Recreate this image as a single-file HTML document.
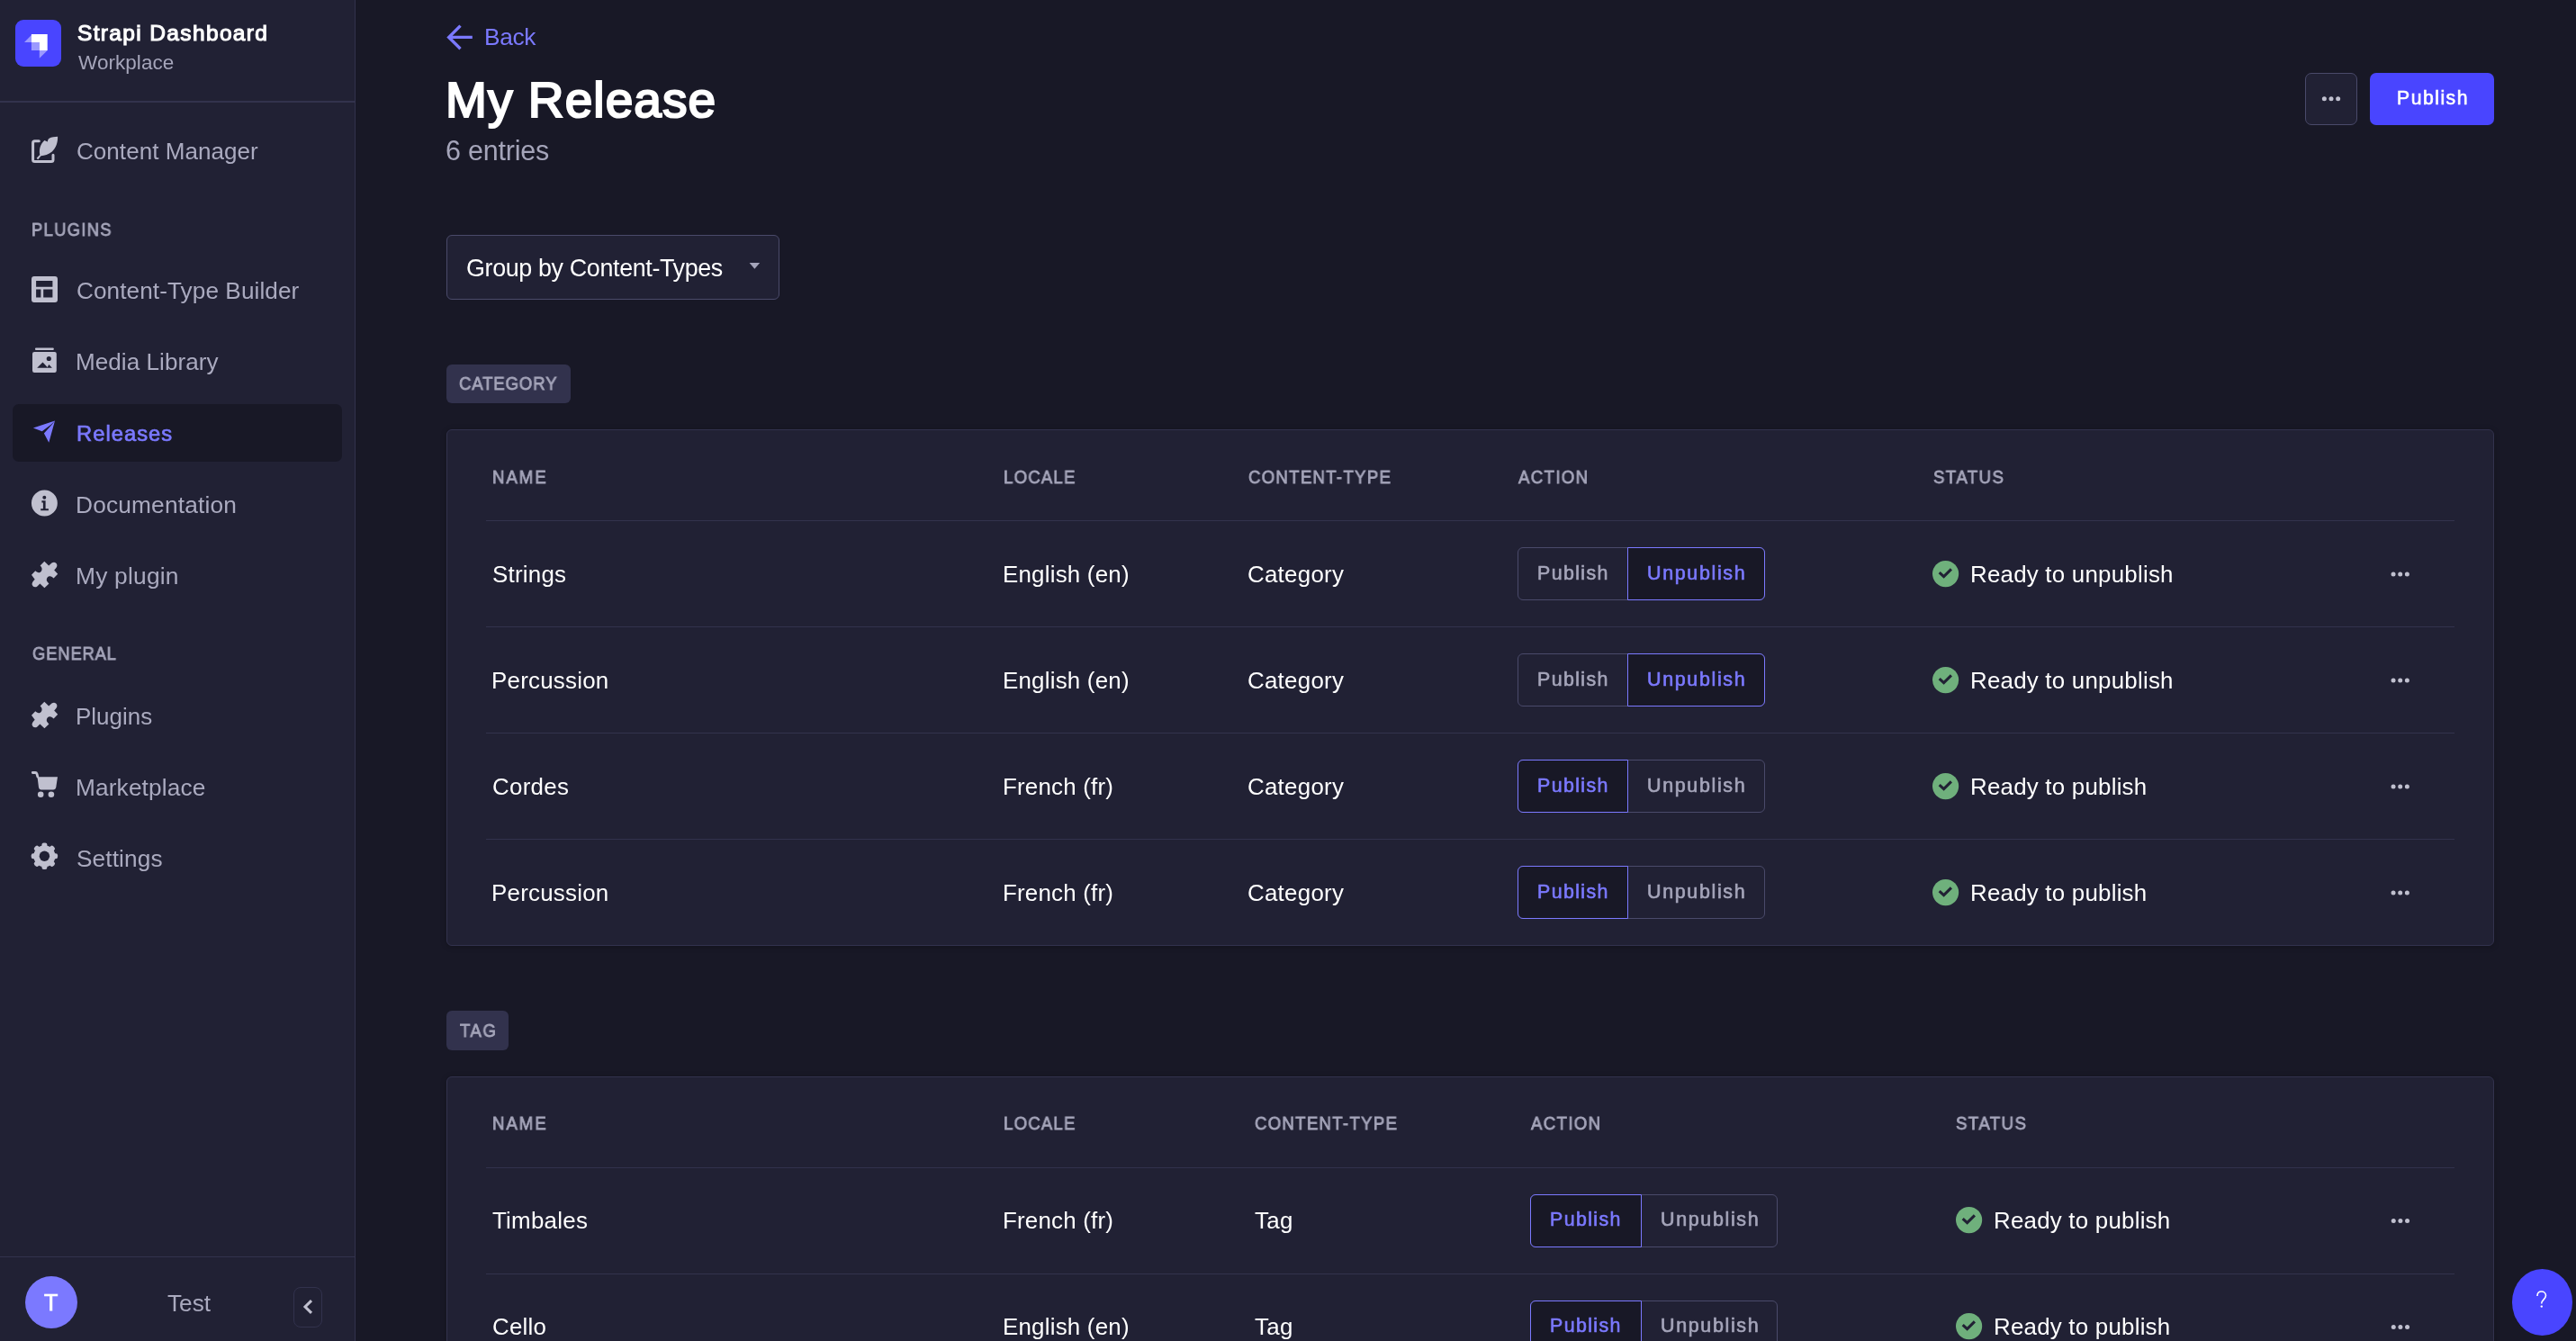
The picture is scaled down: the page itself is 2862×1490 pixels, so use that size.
<!DOCTYPE html>
<html lang="en"><head><meta charset="utf-8"><title>My Release | Strapi</title>
<style>
*{box-sizing:border-box;margin:0;padding:0}
html,body{width:2862px;height:1490px;overflow:hidden;background:#181826;font-family:"Liberation Sans",sans-serif}
.t{position:absolute;line-height:1;white-space:nowrap;will-change:transform}
.ic{position:absolute;overflow:visible}
nav.side{position:absolute;left:0;top:0;width:395px;height:1490px;background:#212134;border-right:1px solid #32324d}
.side .hdr-b{position:absolute;left:0;top:112px;width:394px;height:2px;background:#32324d}
.side .ftr-b{position:absolute;left:0;top:1396px;width:394px;height:1px;background:#32324d}
.logo{position:absolute;left:17px;top:22px;width:51px;height:52px;border-radius:9px;background:#4945ff}
.active{position:absolute;left:14px;top:449px;width:366px;height:64px;border-radius:7px;background:#181826}
.avatar{position:absolute;left:28px;top:1418px;width:58px;height:58px;border-radius:50%;background:#7b79ff}
.collapse{position:absolute;left:326px;top:1430px;width:32px;height:45px;border:1px solid #32324d;border-radius:8px}
.panel{position:absolute;background:#212134;border:1px solid #32324d;border-radius:6px;box-shadow:0 1px 6px rgba(0,0,0,.25)}
.hr{position:absolute;height:1px;background:#32324d}
.grp{position:absolute;border:1px solid #4a4a6a;border-radius:6px}
.seg{position:absolute}
.seg.act{background:#181826;border:1px solid #7b79ff}
.btn{position:absolute;border-radius:7px}
.badge{position:absolute;background:#32324d;border-radius:6px}
.select{position:absolute;left:496px;top:261px;width:370px;height:72px;background:#212134;border:1px solid #4a4a6a;border-radius:6px}
.help{position:absolute;left:2791px;top:1410px;width:67px;height:74px;border-radius:50%;background:#4945ff}
</style></head>
<body>
<nav class="side">
  <div class="logo"></div>
  <svg class="ic" style="left:17px;top:22px" width="51" height="52" viewBox="17 22 51 52">
    <path d="M34.9 38 H52.7 V55.9 H43.8 V47.1 H34.9 Z" fill="#fff"/>
    <path d="M27 47.1 L34.9 39.1 V47.1 Z M34.9 47.1 H43.8 V55.9 H34.9 Z M43.8 55.9 H52.7 L43.8 64.8 Z" fill="#fff" fill-opacity=".45"/>
  </svg>
  <div class="hdr-b"></div>
  <div class="active"></div>
  <!-- Content Manager icon -->
  <svg class="ic" style="left:30px;top:146px" width="40" height="40" viewBox="30 146 40 40">
    <path d="M43.3 156.7 H38.6 a2 2 0 0 0 -2 2 V177.6 a2 2 0 0 0 2 2 H57 a2 2 0 0 0 2 -2 V172.2" stroke="#c0c0cf" stroke-width="3" fill="none" stroke-linecap="round"/>
    <path d="M40.6 175.8 L44.3 172.1 C43.2 166 44.6 160.2 49.4 155.9 L52.9 157.6 C53 156 53.4 154.8 54.2 153.9 C57.4 152.3 61 151.9 64.1 151.8 C64.3 158.3 62.3 164.5 57.8 168.5 C54 171.8 49.3 172.8 45.5 173.2 L42.2 177.2 Z" fill="#c0c0cf"/>
  </svg>
  <!-- CTB icon -->
  <svg class="ic" style="left:30px;top:300px" width="40" height="40" viewBox="30 300 40 40">
    <path fill-rule="evenodd" fill="#c0c0cf" d="M38 306.9 H61 a3 3 0 0 1 3 3 V333 a3 3 0 0 1 -3 3 H38 a3 3 0 0 1 -3 -3 V309.9 a3 3 0 0 1 3 -3 Z M40.1 312.1 V318.7 H58.4 V312.1 Z M40.1 321.5 V330.4 H45.4 V321.5 Z M48.2 321.5 V330.4 H58.4 V321.5 Z"/>
  </svg>
  <!-- Media library icon -->
  <svg class="ic" style="left:30px;top:380px" width="40" height="40" viewBox="30 380 40 40">
    <rect x="39" y="386.4" width="20.8" height="2.7" rx="1" fill="#c0c0cf"/>
    <path fill-rule="evenodd" fill="#c0c0cf" d="M38.2 390.9 H60.6 a2.2 2.2 0 0 1 2.2 2.2 V411.7 a2.2 2.2 0 0 1 -2.2 2.2 H38.2 a2.2 2.2 0 0 1 -2.2 -2.2 V393.1 a2.2 2.2 0 0 1 2.2 -2.2 Z M41.2 408.8 L47.5 402.5 L52.7 407.9 L54.3 405.1 L57.9 408.8 Z M54.3 398.5 m-2.6 0 a2.6 2.6 0 1 0 5.2 0 a2.6 2.6 0 1 0 -5.2 0 Z"/>
  </svg>
  <!-- Releases icon -->
  <svg class="ic" style="left:30px;top:460px" width="40" height="40" viewBox="30 460 40 40">
    <path fill="#7b79ff" d="M36.9 475.5 L61 467.5 L56.4 472 L46.7 479.3 Z M48.9 481.6 L57 472.6 L61 467.5 L54.3 491.8 Z"/>
  </svg>
  <!-- Documentation icon -->
  <svg class="ic" style="left:30px;top:540px" width="40" height="40" viewBox="30 540 40 40">
    <path fill-rule="evenodd" fill="#c0c0cf" d="M49.4 544.6 a14.45 14.45 0 1 1 0 28.9 a14.45 14.45 0 1 1 0 -28.9 Z M49.3 550.8 a2 2 0 1 0 0 4 a2 2 0 1 0 0 -4 Z M46.4 556.3 V558.4 H47.9 V565.3 H45.2 V567.2 H53.9 V565.3 H50.6 V556.3 Z"/>
  </svg>
  <!-- puzzle icons -->
  <svg class="ic" style="left:30px;top:618px" width="40" height="40" viewBox="0 0 40 40">
    <path id="puz" fill="#c0c0cf" d="M19.3 5.8 L24.2 10.6 L27.5 7.6 C29.6 6 32.5 6.5 33.3 9.6 C33.8 11.5 32.6 13.1 30.2 15.6 L34.2 19.8 L29.6 24.6 C28.4 23.1 26.6 21.8 24.6 22.3 C22.2 23 21.3 25.6 22 27.5 C22.6 28.6 23.4 29.3 24.4 30.4 L19.4 35.2 L14.4 30.4 L11.4 33.4 C9.5 34.9 6.7 34.6 5.7 31.8 C5.2 29.8 6.3 28.1 8.7 25.7 L5 20.7 L9.3 16.3 C10.6 17.8 12.6 18.6 14.4 17.9 C16.6 17 17 14.4 16.3 12.8 C15.9 11.9 15.3 11.2 14.6 10.5 Z"/>
  </svg>
  <svg class="ic" style="left:30px;top:774px" width="40" height="40" viewBox="0 0 40 40">
    <use href="#puz"/>
  </svg>
  <!-- cart icon -->
  <svg class="ic" style="left:30px;top:852px" width="40" height="40" viewBox="30 852 40 40">
    <path d="M36.3 858.5 H39.3 Q40.5 858.5 41 860 L41.8 863" stroke="#c0c0cf" stroke-width="2.8" fill="none" stroke-linecap="round"/>
    <path fill="#c0c0cf" d="M41.5 863.2 H64 L62.3 874.5 Q61.8 877.4 59 877.4 H45.5 Q43.4 877.4 43 875 Z"/>
    <circle cx="45.2" cy="882.7" r="3.3" fill="#c0c0cf"/><circle cx="56.9" cy="882.7" r="3.3" fill="#c0c0cf"/>
  </svg>
  <!-- cog icon -->
  <svg class="ic" style="left:30px;top:931px" width="40" height="40" viewBox="30 931 40 40">
    <g transform="translate(49.4 951.3)" fill="#c0c0cf">
      <circle r="12"/>
      <rect x="-3" y="-14.7" width="6" height="8" rx="2.2" transform="rotate(0)"/>
      <rect x="-3" y="-14.7" width="6" height="8" rx="2.2" transform="rotate(45)"/>
      <rect x="-3" y="-14.7" width="6" height="8" rx="2.2" transform="rotate(90)"/>
      <rect x="-3" y="-14.7" width="6" height="8" rx="2.2" transform="rotate(135)"/>
      <rect x="-3" y="-14.7" width="6" height="8" rx="2.2" transform="rotate(180)"/>
      <rect x="-3" y="-14.7" width="6" height="8" rx="2.2" transform="rotate(225)"/>
      <rect x="-3" y="-14.7" width="6" height="8" rx="2.2" transform="rotate(270)"/>
      <rect x="-3" y="-14.7" width="6" height="8" rx="2.2" transform="rotate(315)"/>
      <circle r="5.7" fill="#212134"/>
    </g>
  </svg>
  <div class="ftr-b"></div>
  <div class="avatar"></div>
  <div class="collapse"></div>
  <svg class="ic" style="left:330px;top:1440px" width="24" height="24" viewBox="330 1440 24 24">
    <path d="M346 1445.2 L339 1452 L346 1458.9" stroke="#c0c0cf" stroke-width="3" fill="none"/>
  </svg>
</nav>
<main>
  <svg class="ic" style="left:490px;top:22px" width="40" height="40" viewBox="490 22 40 40">
    <path d="M524.8 41.4 H500 M511.5 28.6 L498.7 41.4 L511.5 54.2" stroke="#7b79ff" stroke-width="3.4" fill="none"/>
  </svg>
  <div class="btn" style="left:2561px;top:81px;width:58px;height:58px;background:#212134;border:1px solid #4a4a6a"></div>
  <svg class="ic" style="left:2575px;top:102px" width="30" height="16" viewBox="2575 102 30 16"><circle cx="2582.35" cy="109.70" r="2.5" fill="#c0c0cf"/><circle cx="2590.00" cy="109.70" r="2.5" fill="#c0c0cf"/><circle cx="2597.65" cy="109.70" r="2.5" fill="#c0c0cf"/></svg>
  <div class="btn" style="left:2633px;top:81px;width:138px;height:58px;background:#4945ff"></div>
  <div class="select"></div>
  <svg class="ic" style="left:828px;top:288px" width="20" height="14" viewBox="828 288 20 14">
    <path d="M832.6 292 H844.2 L838.4 298.8 Z" fill="#a5a5ba"/>
  </svg>
  <div class="badge" style="left:496px;top:405px;width:138px;height:43px"></div>
  <div class="badge" style="left:496px;top:1123px;width:69px;height:44px"></div>
<div class="panel" style="left:496px;top:477px;width:2275px;height:574px"></div>
<div class="hr" style="left:540px;top:578px;width:2187px"></div>
<div class="hr" style="left:540px;top:696px;width:2187px"></div>
<div class="hr" style="left:540px;top:814px;width:2187px"></div>
<div class="hr" style="left:540px;top:932px;width:2187px"></div>
<div class="grp" style="left:1686px;top:608px;width:275px;height:59px"></div><div class="seg act" style="left:1808px;top:608px;width:153px;height:59px;border-radius:0 6px 6px 0"></div>
<svg class="ic" style="left:2146.80px;top:622.70px" width="29.2" height="29.2" viewBox="0 0 29.2 29.2"><circle cx="14.6" cy="14.6" r="14.6" fill="#6fb07c"/><path d="M7.7 13.2 L12.6 17.7 L20.9 9.4" stroke="#212134" stroke-width="3.1" fill="none"/></svg>
<svg class="ic" style="left:2650px;top:630px" width="34" height="16" viewBox="2650 630 34 16"><circle cx="2659.05" cy="638.00" r="2.5" fill="#c0c0cf"/><circle cx="2666.70" cy="638.00" r="2.5" fill="#c0c0cf"/><circle cx="2674.35" cy="638.00" r="2.5" fill="#c0c0cf"/></svg>
<div class="grp" style="left:1686px;top:726px;width:275px;height:59px"></div><div class="seg act" style="left:1808px;top:726px;width:153px;height:59px;border-radius:0 6px 6px 0"></div>
<svg class="ic" style="left:2146.80px;top:740.70px" width="29.2" height="29.2" viewBox="0 0 29.2 29.2"><circle cx="14.6" cy="14.6" r="14.6" fill="#6fb07c"/><path d="M7.7 13.2 L12.6 17.7 L20.9 9.4" stroke="#212134" stroke-width="3.1" fill="none"/></svg>
<svg class="ic" style="left:2650px;top:748px" width="34" height="16" viewBox="2650 748 34 16"><circle cx="2659.05" cy="756.00" r="2.5" fill="#c0c0cf"/><circle cx="2666.70" cy="756.00" r="2.5" fill="#c0c0cf"/><circle cx="2674.35" cy="756.00" r="2.5" fill="#c0c0cf"/></svg>
<div class="grp" style="left:1686px;top:844px;width:275px;height:59px"></div><div class="seg act" style="left:1686px;top:844px;width:123px;height:59px;border-radius:6px 0 0 6px"></div>
<svg class="ic" style="left:2146.80px;top:858.70px" width="29.2" height="29.2" viewBox="0 0 29.2 29.2"><circle cx="14.6" cy="14.6" r="14.6" fill="#6fb07c"/><path d="M7.7 13.2 L12.6 17.7 L20.9 9.4" stroke="#212134" stroke-width="3.1" fill="none"/></svg>
<svg class="ic" style="left:2650px;top:866px" width="34" height="16" viewBox="2650 866 34 16"><circle cx="2659.05" cy="874.00" r="2.5" fill="#c0c0cf"/><circle cx="2666.70" cy="874.00" r="2.5" fill="#c0c0cf"/><circle cx="2674.35" cy="874.00" r="2.5" fill="#c0c0cf"/></svg>
<div class="grp" style="left:1686px;top:962px;width:275px;height:59px"></div><div class="seg act" style="left:1686px;top:962px;width:123px;height:59px;border-radius:6px 0 0 6px"></div>
<svg class="ic" style="left:2146.80px;top:976.70px" width="29.2" height="29.2" viewBox="0 0 29.2 29.2"><circle cx="14.6" cy="14.6" r="14.6" fill="#6fb07c"/><path d="M7.7 13.2 L12.6 17.7 L20.9 9.4" stroke="#212134" stroke-width="3.1" fill="none"/></svg>
<svg class="ic" style="left:2650px;top:984px" width="34" height="16" viewBox="2650 984 34 16"><circle cx="2659.05" cy="992.00" r="2.5" fill="#c0c0cf"/><circle cx="2666.70" cy="992.00" r="2.5" fill="#c0c0cf"/><circle cx="2674.35" cy="992.00" r="2.5" fill="#c0c0cf"/></svg>
<div class="panel" style="left:496px;top:1196px;width:2275px;height:500px"></div>
<div class="hr" style="left:540px;top:1297px;width:2187px"></div>
<div class="hr" style="left:540px;top:1415px;width:2187px"></div>
<div class="grp" style="left:1700px;top:1327px;width:275px;height:59px"></div><div class="seg act" style="left:1700px;top:1327px;width:124px;height:59px;border-radius:6px 0 0 6px"></div>
<svg class="ic" style="left:2172.80px;top:1340.70px" width="29.2" height="29.2" viewBox="0 0 29.2 29.2"><circle cx="14.6" cy="14.6" r="14.6" fill="#6fb07c"/><path d="M7.7 13.2 L12.6 17.7 L20.9 9.4" stroke="#212134" stroke-width="3.1" fill="none"/></svg>
<svg class="ic" style="left:2650px;top:1348px" width="34" height="16" viewBox="2650 1348 34 16"><circle cx="2659.25" cy="1356.50" r="2.5" fill="#c0c0cf"/><circle cx="2666.90" cy="1356.50" r="2.5" fill="#c0c0cf"/><circle cx="2674.55" cy="1356.50" r="2.5" fill="#c0c0cf"/></svg>
<div class="grp" style="left:1700px;top:1445px;width:275px;height:59px"></div><div class="seg act" style="left:1700px;top:1445px;width:124px;height:59px;border-radius:6px 0 0 6px"></div>
<svg class="ic" style="left:2172.80px;top:1458.70px" width="29.2" height="29.2" viewBox="0 0 29.2 29.2"><circle cx="14.6" cy="14.6" r="14.6" fill="#6fb07c"/><path d="M7.7 13.2 L12.6 17.7 L20.9 9.4" stroke="#212134" stroke-width="3.1" fill="none"/></svg>
<svg class="ic" style="left:2650px;top:1466px" width="34" height="16" viewBox="2650 1466 34 16"><circle cx="2659.25" cy="1474.50" r="2.5" fill="#c0c0cf"/><circle cx="2666.90" cy="1474.50" r="2.5" fill="#c0c0cf"/><circle cx="2674.55" cy="1474.50" r="2.5" fill="#c0c0cf"/></svg>
  <div class="help"></div>
  <svg class="ic" style="left:2810px;top:1430px" width="28" height="28" viewBox="2810 1430 28 28">
    <path d="M2819 1440 C2819 1436.5 2821.2 1435 2823.6 1435 C2826.3 1435 2828.5 1436.8 2828.5 1439.6 C2828.5 1443.5 2823.7 1444.3 2823.7 1448.4" stroke="#fff" stroke-width="1.6" fill="none"/>
    <circle cx="2823.8" cy="1451.6" r="1.2" fill="#fff"/>
  </svg>
</main>
<div class="t" style="left:86.27px;top:25.00px;font-size:24.54px;letter-spacing:1.340px;color:#ffffff;-webkit-text-stroke:1.10px #ffffff">Strapi Dashboard</div>
<div class="t" style="left:86.70px;top:59.00px;font-size:22.51px;letter-spacing:0.047px;color:#a5a5ba;-webkit-text-stroke:0.00px #a5a5ba">Workplace</div>
<div class="t" style="left:85.20px;top:155.00px;font-size:26.05px;letter-spacing:0.028px;color:#aaaabf;-webkit-text-stroke:0.00px #aaaabf">Content Manager</div>
<div class="t" style="left:85.19px;top:310.00px;font-size:26.17px;letter-spacing:0.082px;color:#aaaabf;-webkit-text-stroke:0.00px #aaaabf">Content-Type Builder</div>
<div class="t" style="left:84.41px;top:389.00px;font-size:26.09px;letter-spacing:0.047px;color:#aaaabf;-webkit-text-stroke:0.00px #aaaabf">Media Library</div>
<div class="t" style="left:84.40px;top:548.00px;font-size:26.30px;letter-spacing:0.165px;color:#aaaabf;-webkit-text-stroke:0.00px #aaaabf">Documentation</div>
<div class="t" style="left:84.39px;top:627.00px;font-size:26.39px;letter-spacing:0.204px;color:#aaaabf;-webkit-text-stroke:0.00px #aaaabf">My plugin</div>
<div class="t" style="left:84.42px;top:783.00px;font-size:25.98px;letter-spacing:-0.010px;color:#aaaabf;-webkit-text-stroke:0.00px #aaaabf">Plugins</div>
<div class="t" style="left:84.40px;top:862.00px;font-size:26.26px;letter-spacing:0.136px;color:#aaaabf;-webkit-text-stroke:0.00px #aaaabf">Marketplace</div>
<div class="t" style="left:85.45px;top:941.00px;font-size:26.23px;letter-spacing:0.119px;color:#aaaabf;-webkit-text-stroke:0.00px #aaaabf">Settings</div>
<div class="t" style="left:85.16px;top:471.00px;font-size:23.74px;letter-spacing:1.030px;color:#7b79ff;-webkit-text-stroke:0.71px #7b79ff">Releases</div>
<div class="t" style="left:35.22px;top:246.00px;font-size:19.33px;letter-spacing:1.389px;color:#a5a5ba;-webkit-text-stroke:0.77px #a5a5ba;transform:scaleX(0.950);transform-origin:0 0">PLUGINS</div>
<div class="t" style="left:35.77px;top:717.00px;font-size:19.33px;letter-spacing:0.916px;color:#a5a5ba;-webkit-text-stroke:0.77px #a5a5ba;transform:scaleX(0.950);transform-origin:0 0">GENERAL</div>
<div class="t" style="left:49.27px;top:1435.00px;font-size:25.16px;letter-spacing:0.000px;color:#ffffff;-webkit-text-stroke:0.75px #ffffff">T</div>
<div class="t" style="left:185.58px;top:1435.00px;font-size:26.19px;letter-spacing:0.030px;color:#aaaabf;-webkit-text-stroke:0.00px #aaaabf">Test</div>
<div class="t" style="left:537.70px;top:28.00px;font-size:26.25px;letter-spacing:-0.328px;color:#7b79ff;-webkit-text-stroke:0.00px #7b79ff">Back</div>
<div class="t" style="left:494.50px;top:84.00px;font-size:55.00px;letter-spacing:1.087px;color:#ffffff;-webkit-text-stroke:2.20px #ffffff">My Release</div>
<div class="t" style="left:495.48px;top:152.00px;font-size:30.46px;letter-spacing:-0.188px;color:#a5a5ba;-webkit-text-stroke:0.00px #a5a5ba">6 entries</div>
<div class="t" style="left:2663.02px;top:98.00px;font-size:21.17px;letter-spacing:1.516px;color:#ffffff;-webkit-text-stroke:0.64px #ffffff">Publish</div>
<div class="t" style="left:518.26px;top:285.00px;font-size:26.88px;letter-spacing:-0.358px;color:#ffffff;-webkit-text-stroke:0.00px #ffffff">Group by Content-Types</div>
<div class="t" style="left:510.46px;top:417.00px;font-size:19.60px;letter-spacing:0.865px;color:#a5a5ba;-webkit-text-stroke:0.78px #a5a5ba;transform:scaleX(0.950);transform-origin:0 0">CATEGORY</div>
<div class="t" style="left:511.02px;top:1136.00px;font-size:19.60px;letter-spacing:1.594px;color:#a5a5ba;-webkit-text-stroke:0.78px #a5a5ba;transform:scaleX(0.950);transform-origin:0 0">TAG</div>
<div class="t" style="left:546.70px;top:521.00px;font-size:19.60px;letter-spacing:2.051px;color:#a5a5ba;-webkit-text-stroke:0.78px #a5a5ba;transform:scaleX(0.950);transform-origin:0 0">NAME</div>
<div class="t" style="left:1114.90px;top:521.00px;font-size:19.60px;letter-spacing:1.244px;color:#a5a5ba;-webkit-text-stroke:0.78px #a5a5ba;transform:scaleX(0.950);transform-origin:0 0">LOCALE</div>
<div class="t" style="left:1386.66px;top:521.00px;font-size:19.60px;letter-spacing:1.355px;color:#a5a5ba;-webkit-text-stroke:0.78px #a5a5ba;transform:scaleX(0.950);transform-origin:0 0">CONTENT-TYPE</div>
<div class="t" style="left:1686.99px;top:521.00px;font-size:19.60px;letter-spacing:1.417px;color:#a5a5ba;-webkit-text-stroke:0.78px #a5a5ba;transform:scaleX(0.950);transform-origin:0 0">ACTION</div>
<div class="t" style="left:2147.85px;top:521.00px;font-size:19.60px;letter-spacing:1.528px;color:#a5a5ba;-webkit-text-stroke:0.78px #a5a5ba;transform:scaleX(0.950);transform-origin:0 0">STATUS</div>
<div class="t" style="left:546.76px;top:626.00px;font-size:25.89px;letter-spacing:0.237px;color:#ffffff;-webkit-text-stroke:0.00px #ffffff">Strings</div>
<div class="t" style="left:1113.93px;top:626.00px;font-size:25.89px;letter-spacing:0.221px;color:#ffffff;-webkit-text-stroke:0.00px #ffffff">English (en)</div>
<div class="t" style="left:1385.91px;top:626.00px;font-size:25.89px;letter-spacing:0.268px;color:#ffffff;-webkit-text-stroke:0.00px #ffffff">Category</div>
<div class="t" style="left:2189.13px;top:626.00px;font-size:25.89px;letter-spacing:0.231px;color:#ffffff;-webkit-text-stroke:0.00px #ffffff">Ready to unpublish</div>
<div class="t" style="left:1708.11px;top:627.00px;font-size:21.36px;letter-spacing:1.398px;color:#a5a5ba;-webkit-text-stroke:0.64px #a5a5ba">Publish</div>
<div class="t" style="left:1830.42px;top:627.00px;font-size:21.47px;letter-spacing:1.650px;color:#7b79ff;-webkit-text-stroke:0.64px #7b79ff">Unpublish</div>
<div class="t" style="left:545.73px;top:744.00px;font-size:25.89px;letter-spacing:0.250px;color:#ffffff;-webkit-text-stroke:0.00px #ffffff">Percussion</div>
<div class="t" style="left:1113.93px;top:744.00px;font-size:25.89px;letter-spacing:0.221px;color:#ffffff;-webkit-text-stroke:0.00px #ffffff">English (en)</div>
<div class="t" style="left:1385.91px;top:744.00px;font-size:25.89px;letter-spacing:0.268px;color:#ffffff;-webkit-text-stroke:0.00px #ffffff">Category</div>
<div class="t" style="left:2189.13px;top:744.00px;font-size:25.89px;letter-spacing:0.231px;color:#ffffff;-webkit-text-stroke:0.00px #ffffff">Ready to unpublish</div>
<div class="t" style="left:1708.11px;top:745.00px;font-size:21.36px;letter-spacing:1.398px;color:#a5a5ba;-webkit-text-stroke:0.64px #a5a5ba">Publish</div>
<div class="t" style="left:1830.42px;top:745.00px;font-size:21.47px;letter-spacing:1.650px;color:#7b79ff;-webkit-text-stroke:0.64px #7b79ff">Unpublish</div>
<div class="t" style="left:546.51px;top:862.00px;font-size:25.89px;letter-spacing:0.293px;color:#ffffff;-webkit-text-stroke:0.00px #ffffff">Cordes</div>
<div class="t" style="left:1113.93px;top:862.00px;font-size:25.89px;letter-spacing:0.212px;color:#ffffff;-webkit-text-stroke:0.00px #ffffff">French (fr)</div>
<div class="t" style="left:1385.91px;top:862.00px;font-size:25.89px;letter-spacing:0.268px;color:#ffffff;-webkit-text-stroke:0.00px #ffffff">Category</div>
<div class="t" style="left:2189.13px;top:862.00px;font-size:25.89px;letter-spacing:0.228px;color:#ffffff;-webkit-text-stroke:0.00px #ffffff">Ready to publish</div>
<div class="t" style="left:1708.11px;top:863.00px;font-size:21.36px;letter-spacing:1.398px;color:#7b79ff;-webkit-text-stroke:0.64px #7b79ff">Publish</div>
<div class="t" style="left:1830.42px;top:863.00px;font-size:21.47px;letter-spacing:1.650px;color:#a5a5ba;-webkit-text-stroke:0.64px #a5a5ba">Unpublish</div>
<div class="t" style="left:545.73px;top:980.00px;font-size:25.89px;letter-spacing:0.250px;color:#ffffff;-webkit-text-stroke:0.00px #ffffff">Percussion</div>
<div class="t" style="left:1113.93px;top:980.00px;font-size:25.89px;letter-spacing:0.212px;color:#ffffff;-webkit-text-stroke:0.00px #ffffff">French (fr)</div>
<div class="t" style="left:1385.91px;top:980.00px;font-size:25.89px;letter-spacing:0.268px;color:#ffffff;-webkit-text-stroke:0.00px #ffffff">Category</div>
<div class="t" style="left:2189.13px;top:980.00px;font-size:25.89px;letter-spacing:0.228px;color:#ffffff;-webkit-text-stroke:0.00px #ffffff">Ready to publish</div>
<div class="t" style="left:1708.11px;top:981.00px;font-size:21.36px;letter-spacing:1.398px;color:#7b79ff;-webkit-text-stroke:0.64px #7b79ff">Publish</div>
<div class="t" style="left:1830.42px;top:981.00px;font-size:21.47px;letter-spacing:1.650px;color:#a5a5ba;-webkit-text-stroke:0.64px #a5a5ba">Unpublish</div>
<div class="t" style="left:546.70px;top:1239.00px;font-size:19.60px;letter-spacing:2.051px;color:#a5a5ba;-webkit-text-stroke:0.78px #a5a5ba;transform:scaleX(0.950);transform-origin:0 0">NAME</div>
<div class="t" style="left:1114.90px;top:1239.00px;font-size:19.60px;letter-spacing:1.244px;color:#a5a5ba;-webkit-text-stroke:0.78px #a5a5ba;transform:scaleX(0.950);transform-origin:0 0">LOCALE</div>
<div class="t" style="left:1393.76px;top:1239.00px;font-size:19.60px;letter-spacing:1.355px;color:#a5a5ba;-webkit-text-stroke:0.78px #a5a5ba;transform:scaleX(0.950);transform-origin:0 0">CONTENT-TYPE</div>
<div class="t" style="left:1701.39px;top:1239.00px;font-size:19.60px;letter-spacing:1.417px;color:#a5a5ba;-webkit-text-stroke:0.78px #a5a5ba;transform:scaleX(0.950);transform-origin:0 0">ACTION</div>
<div class="t" style="left:2173.05px;top:1239.00px;font-size:19.60px;letter-spacing:1.528px;color:#a5a5ba;-webkit-text-stroke:0.78px #a5a5ba;transform:scaleX(0.950);transform-origin:0 0">STATUS</div>
<div class="t" style="left:547.28px;top:1344.00px;font-size:25.89px;letter-spacing:0.265px;color:#ffffff;-webkit-text-stroke:0.00px #ffffff">Timbales</div>
<div class="t" style="left:1113.93px;top:1344.00px;font-size:25.89px;letter-spacing:0.212px;color:#ffffff;-webkit-text-stroke:0.00px #ffffff">French (fr)</div>
<div class="t" style="left:1393.78px;top:1344.00px;font-size:25.89px;letter-spacing:0.357px;color:#ffffff;-webkit-text-stroke:0.00px #ffffff">Tag</div>
<div class="t" style="left:2214.93px;top:1344.00px;font-size:25.89px;letter-spacing:0.228px;color:#ffffff;-webkit-text-stroke:0.00px #ffffff">Ready to publish</div>
<div class="t" style="left:1722.11px;top:1345.00px;font-size:21.36px;letter-spacing:1.398px;color:#7b79ff;-webkit-text-stroke:0.64px #7b79ff">Publish</div>
<div class="t" style="left:1845.42px;top:1345.00px;font-size:21.47px;letter-spacing:1.650px;color:#a5a5ba;-webkit-text-stroke:0.64px #a5a5ba">Unpublish</div>
<div class="t" style="left:546.51px;top:1462.00px;font-size:25.89px;letter-spacing:0.256px;color:#ffffff;-webkit-text-stroke:0.00px #ffffff">Cello</div>
<div class="t" style="left:1113.93px;top:1462.00px;font-size:25.89px;letter-spacing:0.221px;color:#ffffff;-webkit-text-stroke:0.00px #ffffff">English (en)</div>
<div class="t" style="left:1393.78px;top:1462.00px;font-size:25.89px;letter-spacing:0.357px;color:#ffffff;-webkit-text-stroke:0.00px #ffffff">Tag</div>
<div class="t" style="left:2214.93px;top:1462.00px;font-size:25.89px;letter-spacing:0.228px;color:#ffffff;-webkit-text-stroke:0.00px #ffffff">Ready to publish</div>
<div class="t" style="left:1722.11px;top:1463.00px;font-size:21.36px;letter-spacing:1.398px;color:#7b79ff;-webkit-text-stroke:0.64px #7b79ff">Publish</div>
<div class="t" style="left:1845.42px;top:1463.00px;font-size:21.47px;letter-spacing:1.650px;color:#a5a5ba;-webkit-text-stroke:0.64px #a5a5ba">Unpublish</div>
</body></html>
